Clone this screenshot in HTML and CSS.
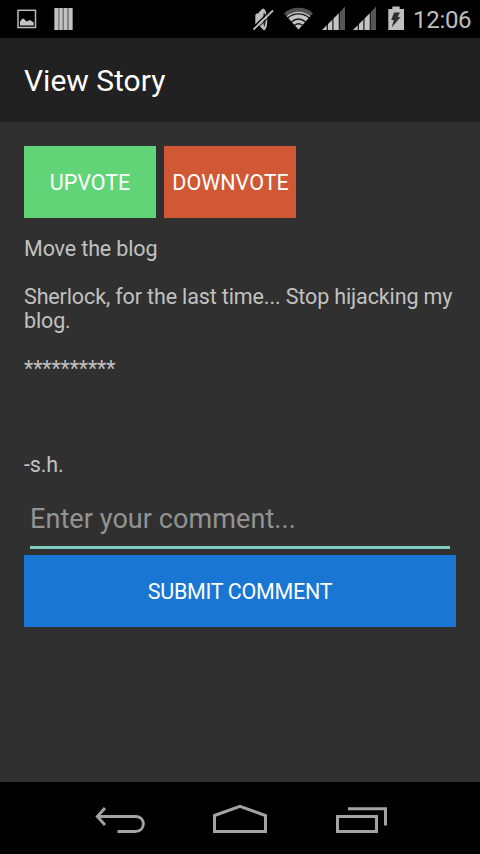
FILE: index.html
```html
<!DOCTYPE html>
<html lang="en">
<head>
<meta charset="utf-8">
<title>View Story</title>
<link rel="stylesheet" href="styles.css">
</head>
<body>
<div class="screen">
  <div class="status-bar">
    <svg class="icon picture" width="20" height="38" viewBox="17 0 20 38"><rect x="18" y="10.300" width="17.500" height="17.200" fill="none" stroke="#bababa" stroke-width="1.500"/><path d="M20 25.500v-4l2-2.500 1.500-.500 3 3 3.500-1.500 3.700 2.500v3z" fill="#c4c4c4"/></svg>
    <svg class="icon bars" width="19" height="38" viewBox="53.500 0 19 38"><path d="M54 8h18v22h-18z" fill="#777"/><path d="M54 8h3.700v22h-3.700zM59 8h3v22h-3zM63.500 8h3.200v22h-3.200zM68.300 8h3.700v22h-3.700z" fill="#c2c2c2"/></svg>
    <span class="spacer"></span>
    <svg class="icon mute" width="22" height="38" viewBox="252 0 22 38"><path d="M255.300 15.500c0-1.500 1-2 2.700-2l3-3.500 2-1.500c5 0 6 21 1 22l-3-3-2.500-3-3.200-.500z" fill="#bcbcbc"/><path d="M264 12c2 3 2 12 .3 15-1.500-4-1.700-10-.3-15z" fill="#222"/><path d="M252.500 28L271.500 9.800" stroke="#000" stroke-width="1.500"/><path d="M253.500 29.500L273 10.500" stroke="#bcbcbc" stroke-width="1.800"/><path d="M255 30.500L274 12" stroke="#000" stroke-width="1"/></svg>
    <svg class="icon wifi" width="30" height="38" viewBox="284 0 30 38"><path d="M298.500 29.500L284 13.200C292 6 305 6 313 13.200z" fill="#525252"/><path d="M298.500 29.500L286.800 16.300C293.500 10.300 303.500 10.300 310.200 16.300z" fill="#c4c4c4"/><path d="M287.500 18c6.500-5.500 15.500-5.500 22 0M291.300 22c4.500-3.700 9.900-3.700 14.400 0M294.500 25.300c2.500-1.900 5.500-1.900 8 0" fill="none" stroke="#111" stroke-width="1.300"/></svg>
    <svg class="icon signal" width="24" height="38" viewBox="322 0 24 38"><path d="M322 30L340 12v18z" fill="#c4c4c4"/><path d="M340 12L345 6.500V30h-5z" fill="#555"/><path d="M327.300 23v7M332.900 18v12M339.300 11v19" stroke="#000" stroke-width="1.100"/></svg>
    <svg class="icon signal second" width="24" height="38" viewBox="353 0 24 38"><path d="M353 30L371 12v18z" fill="#c4c4c4"/><path d="M371 12L376 6.500V30h-5z" fill="#555"/><path d="M358.300 23v7M363.900 18v12M370.300 11v19" stroke="#000" stroke-width="1.100"/></svg>
    <svg class="icon battery" width="16" height="38" viewBox="388 0 16 38"><path d="M392.300 6.500h7.400V9h4.300v21h-15.700V9h4z" fill="#c0c0c0"/><path d="M394 12.500h6l-2.300 4.500h3l-9 10.500 2-7.500h-2.500z" fill="#303030"/></svg>
    <span class="clock">12:06</span>
  </div>
  <header class="app-bar"><h1 class="title">View Story</h1></header>
  <main class="content">
    <div class="votes">
      <button class="button upvote">UPVOTE</button>
      <button class="button downvote">DOWNVOTE</button>
    </div>
    <p class="story">Move the blog

Sherlock, for the last time... Stop hijacking my blog.

**********



-s.h.</p>
    <div class="field"><input class="comment" type="text" placeholder="Enter your comment..."></div>
    <button class="button submit">SUBMIT COMMENT</button>
  </main>
  <nav class="nav-bar">
    <svg width="52" height="72" viewBox="94 782 52 72"><path d="M105 808L97.300 816.500 105 825M97.500 816.500H136C146 816.500 146 831.500 135 831.500H117.500" fill="none" stroke="#a3a3a3" stroke-width="2.900"/></svg>
    <svg width="56" height="72" viewBox="212 782 56 72"><path d="M214.500 815.500L240 806.300 265.500 815.500V831.500H214.500z" fill="none" stroke="#a3a3a3" stroke-width="3"/></svg>
    <svg width="53" height="72" viewBox="335 782 53 72"><path d="M337.500 816.500H376.500V831.500H337.500zM348 808.800H385.500V825.500" fill="none" stroke="#a3a3a3" stroke-width="3"/></svg>
  </nav>
</div>
</body>
</html>
```
FILE: styles.css
```css
* { box-sizing: border-box; }
body { margin: 0; font-family: Roboto, "Liberation Sans", sans-serif; }
.screen { display: flex; flex-direction: column; width: 480px; height: 854px; background: #303030; }
.status-bar { display: flex; height: 38px; padding: 0 8px 0 17px; background: #000; }
.icon { flex: none; }
.bars { margin-left: 16.500px; }
.spacer { flex: 1; }
.wifi { margin-left: 10px; }
.signal { margin-left: 8px; }
.signal.second { margin-left: 7px; }
.battery { margin-left: 11px; }
.clock { width: 59px; margin-left: 9px; color: #bebebe; font-size: 24px; letter-spacing: -0.3px; line-height: 40px; white-space: nowrap; }
.app-bar { display: flex; align-items: center; height: 84px; padding: 2px 24px 0; background: #212121; }
.title { margin: 0; color: #fff; font-size: 30px; font-weight: 400; line-height: 36px; }
.content { flex: 1; padding: 24px 24px 0; }
.votes { display: flex; gap: 8px; }
.button { height: 72px; padding: 2px 0 0; border: 0; border-radius: 0; color: #fff; font-family: inherit; font-size: 21.5px; line-height: 24px; white-space: nowrap; }
.upvote { width: 132px; background: #62d478; }
.downvote { width: 132px; padding-left: 1px; background: #d15835; }
.story { margin: 19px 0 0; color: #c1c1c1; font-size: 21.5px; letter-spacing: -0.13px; line-height: 24px; white-space: pre-wrap; }
.field { height: 72px; margin: 0 6px; border-bottom: 3px solid #7ecfc1; }
.comment { display: block; width: 100%; height: 69px; padding: 15px 0 0; border: 0; outline: 0; background: transparent; color: #fff; font-family: inherit; font-size: 27px; letter-spacing: 0.08px; }
.comment::placeholder { color: #939393; opacity: 1; }
.submit { display: block; width: 100%; margin-top: 6px; background: #1976d2; letter-spacing: -0.3px; }
.nav-bar { display: flex; height: 72px; padding: 0 92px 0 94px; background: #000; }
.nav-bar svg { flex: none; }
.nav-bar svg + svg { margin-left: 66px; }
.nav-bar svg + svg + svg { margin-left: 67px; }
```
